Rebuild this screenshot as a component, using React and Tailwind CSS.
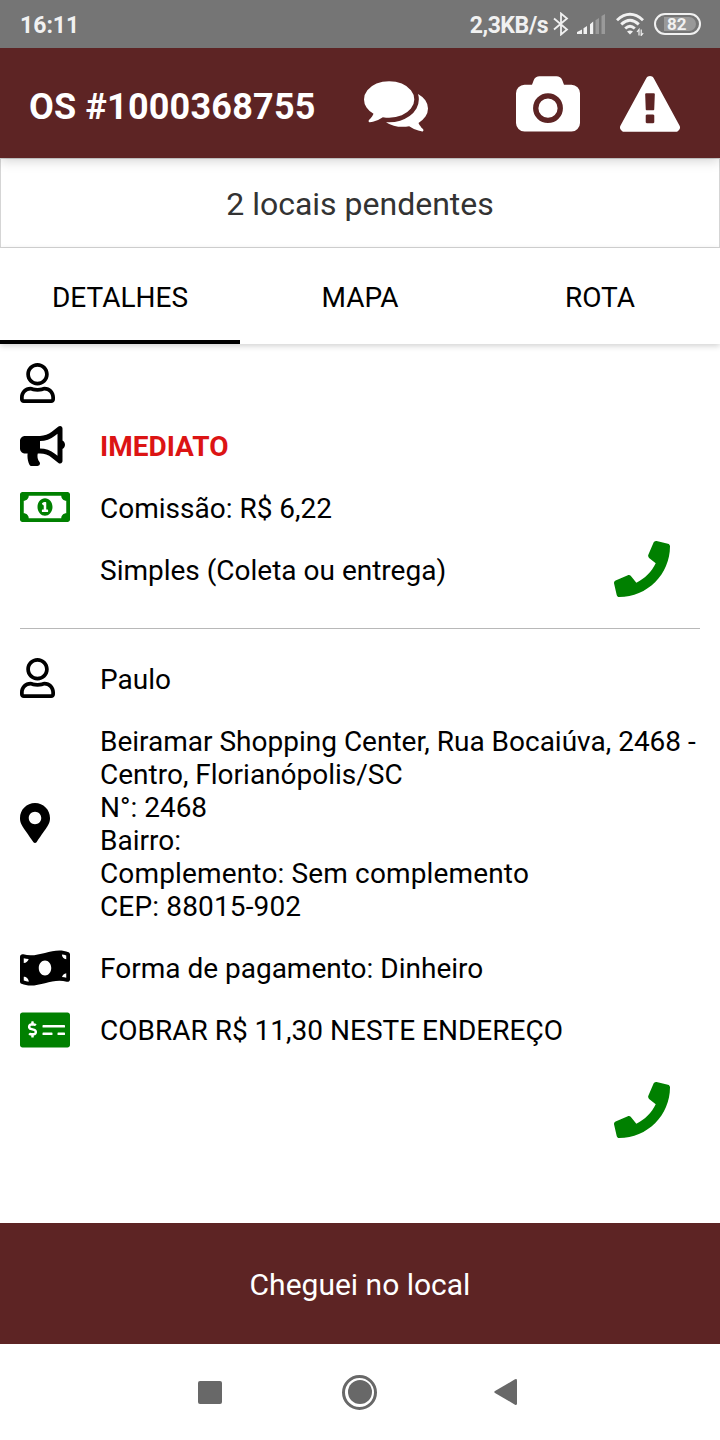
import React from "react";
import {
  FaBullhorn,
  FaMapMarkerAlt,
  FaMoneyBillWave,
  FaMoneyCheckAlt,
  FaPhone,
  FaRegMoneyBillAlt,
  FaRegUser,
} from "react-icons/fa";

function WarningIcon() {
  return (
    <svg className="block h-[60px] w-[60px]" viewBox="0 0 1792 1792" fill="currentColor">
      <path d="M1024 1375v-190q0-14-9.5-23.5t-22.5-9.5h-192q-13 0-22.5 9.5t-9.5 23.5v190q0 14 9.5 23.5t22.5 9.5h192q13 0 22.5-9.5t9.5-23.5zm-2-374l18-459q0-12-10-19-13-11-24-11h-220q-11 0-24 11-10 7-10 21l17 457q0 10 10 16.5t24 6.5h185q14 0 23.5-6.5t10.5-16.5zm-14-934l768 1408q35 63-2 126-17 29-46.5 46t-63.5 17h-1536q-34 0-63.5-17t-46.5-46q-37-63-2-126l768-1408q17-31 47-49t65-18 65 18 47 49z" />
    </svg>
  );
}

function CameraIcon() {
  return (
    <svg className="block h-[60px] w-16" viewBox="0 0 1920 1792" fill="currentColor">
      <path d="M960 672q119 0 203.500 84.500t84.500 203.500-84.500 203.500-203.500 84.500-203.500-84.500-84.500-203.500 84.500-203.500 203.500-84.500zm704-416q106 0 181 75t75 181v896q0 106-75 181t-181 75h-1408q-106 0-181-75t-75-181v-896q0-106 75-181t181-75h224l51-136q19-49 69.500-84.500t103.500-35.500h512q53 0 103.500 35.500t69.500 84.500l51 136h224zm-704 1152q185 0 316.500-131.500t131.500-316.500-131.500-316.500-316.500-131.500-316.500 131.500-131.500 316.500 131.500 316.500 316.500 131.500z" />
    </svg>
  );
}

function ChatIcon() {
  return (
    <svg className="block h-16 w-16" viewBox="0 0 1792 1792" fill="currentColor">
      <path d="M1408 768q0 139-94 257t-256.500 186.500-353.500 68.500q-86 0-176-16-124 88-278 128-36 9-86 16h-3q-11 0-20.500-8t-11.500-21q-1-3-1-6.500t.5-6.500 2-6l2.500-5 3.500-5.500 4-5 4.500-5 4-4.500q5-6 23-25t26-29.500 22.500-29 25-38.500 20.500-44q-124-72-195-177t-71-224q0-139 94-257t256.500-186.500 353.500-68.500 353.500 68.500 256.500 186.500 94 257zm384 256q0 120-71 224.500t-195 176.500q10 24 20.500 44t25 38.500 22.500 29 26 29.500 23 25q1 1 4 4.500t4.500 5 4 5 3.500 5.500l2.500 5 2 6 .5 6.500-1 6.500q-3 14-13 22t-22 7q-50-7-86-16-154-40-278-128-90 16-176 16-271 0-472-132 58 4 88 4 161 0 309-45t264-129q125-92 192-212t67-257q0-77-23-152 129 71 204 178t75 230z" />
    </svg>
  );
}

function StatusBar() {
  return (
    <div className="relative z-20 flex h-12 shrink-0 items-center bg-[#757575] pt-0.5 pr-[19px] pl-5 text-[23px] leading-none font-bold text-[#f1f1f1]">
      <span>16:11</span>
      <span className="ml-auto tracking-[-0.5px]">2,3KB/s</span>
      <svg className="mb-0.5 ml-[5px] block h-6 w-4" viewBox="0 0 16 24" fill="none" stroke="#f1f1f1" strokeWidth="1.8">
        <path d="M1 6.5L14 17.5L8 22.5V1.500L14 6.500L1 17.500" />
      </svg>
      <svg className="mb-0.5 ml-2 block h-6 w-7" viewBox="0 0 28 24" fill="#f1f1f1">
        <path d="M0 22V20L5 17.500V22ZM6.500 22V16.200L10 14V22ZM13 22V12.200L16.200 9.500V22Z" />
        <path opacity=".3" d="M18.500 22V8.200L22 6V22ZM24.500 22V4L28 2V22Z" />
      </svg>
      <svg className="mb-0.5 ml-[11px] block h-6 w-7" viewBox="0 0 28 24" fill="none" stroke="#f1f1f1" strokeWidth="2.9">
        <path d="M1 8.200Q14-3.600 27 8.200M5.200 12.400Q14 4.200 22.800 12.400M9.200 16.500Q14 12 18.800 16.500" />
        <path d="M11 19.500Q14 17.500 17 19.500L14 22.500Z" fill="#f1f1f1" stroke="none" />
        <path d="M23 23.500V17.500L21 20M25.200 17.500V23.500L27.200 21" strokeWidth="1.200" />
      </svg>
      <div className="mb-0.5 ml-2.5 flex h-[22px] w-[47px] items-center rounded-full border-2 border-[#f1f1f1] p-[3px]">
        <div className="ml-[5px] flex h-3.5 w-8 items-center rounded-r-full bg-[#999] pl-[3px] text-[17px] leading-none">
          82
        </div>
      </div>
    </div>
  );
}

function Row({ icon, children }) {
  return (
    <div className="flex items-center py-[14.5px]">
      <div className="flex w-20 shrink-0 items-center">{icon}</div>
      <div className="min-h-[33px] whitespace-nowrap">{children}</div>
    </div>
  );
}

const phoneClass = "block h-14 w-14 text-[#008000]";

export default function App() {
  return (
    <div className="flex h-[1440px] w-[720px] flex-col overflow-hidden bg-white font-['Roboto',sans-serif] text-black">
      <StatusBar />
      <header className="relative z-10 flex h-[110px] shrink-0 items-start bg-[#5d2424] pr-10 pl-[29px] text-white shadow-[0_2px_12px_rgba(0,0,0,0.2)]">
        <h1 className="mt-[41px] w-[335px] text-4xl leading-none font-bold tracking-[0.2px]">OS #1000368755</h1>
        <div className="mt-6">
          <ChatIcon />
        </div>
        <div className="mt-7 ml-auto flex gap-10">
          <CameraIcon />
          <WarningIcon />
        </div>
      </header>
      <div className="flex h-[90px] shrink-0 items-center justify-center border border-[#d5d5d5] pt-0.5 text-[32px] text-[#333]">
        2 locais pendentes
      </div>
      <nav className="grid h-24 shrink-0 grid-cols-3 text-center text-[28px] leading-[100px] shadow-[0_2px_6px_rgba(0,0,0,0.18)]">
        <div className="h-24 border-b-4 border-black">DETALHES</div>
        <div>MAPA</div>
        <div>ROTA</div>
      </nav>
      <main className="flex-1 px-5 pt-[9px] text-[28px] leading-[33px]">
        <Row icon={<FaRegUser className="-mt-[5px] -mb-[3px] block h-10 w-[35px]" />} />
        <Row icon={<FaBullhorn className="-my-1 block h-10 w-[45px]" />}>
          <span className="font-bold text-[#dc1414]">IMEDIATO</span>
        </Row>
        <Row icon={<FaRegMoneyBillAlt className="-mt-[5px] -mb-[3px] block h-10 w-[50px] text-[#008000]" />}>
          Comissão: R$ 6,22
        </Row>
        <div className="flex h-[62px] items-center justify-between pr-[30px]">
          <Row>Simples (Coleta ou entrega)</Row>
          <FaPhone className={`${phoneClass} mb-0.5`} />
        </div>
        <hr className="mt-[27px] mb-[19px] border-[#b8b8b8]" />
        <Row icon={<FaRegUser className="-mt-[5px] -mb-[3px] block h-10 w-[35px]" />}>Paulo</Row>
        <Row icon={<FaMapMarkerAlt className="mb-0.5 block h-10 w-[30px]" />}>
          Beiramar Shopping Center, Rua Bocaiúva, 2468 -<br />
          Centro, Florianópolis/SC
          <br />
          N°: 2468
          <br />
          Bairro:
          <br />
          <span className="tracking-[0.150px]">Complemento: Sem complemento</span>
          <br />
          <span className="tracking-[0.150px]">CEP: 88015-902</span>
        </Row>
        <Row icon={<FaMoneyBillWave className="-my-1 block h-10 w-[50px]" />}>Forma de pagamento: Dinheiro</Row>
        <Row icon={<FaMoneyCheckAlt className="-my-1 block h-10 w-[50px] text-[#008000]" />}>
          COBRAR R$ 11,30 NESTE ENDEREÇO
        </Row>
        <div className="mt-[21px] flex justify-end pr-[30px]">
          <FaPhone className={phoneClass} />
        </div>
      </main>
      <button className="flex h-[121px] shrink-0 items-center justify-center bg-[#5d2424] pt-0.5 text-[30px] text-white">
        Cheguei no local
      </button>
      <div className="flex h-24 shrink-0 items-center pl-[198px]">
        <div className="h-[23px] w-6 rounded-xs bg-[#686868]" />
        <div className="ml-[120px] flex h-[35px] w-[35px] items-center justify-center rounded-full border-[3px] border-[#686868]">
          <div className="h-6 w-6 rounded-full bg-[#686868]" />
        </div>
        <svg className="ml-[117px] block h-[26px] w-[23px]" viewBox="0 0 23 26" fill="#686868">
          <path d="M1 12L21 .3Q23-.5 23 1.500V24.500Q23 26.500 21 25.700L1 14Q-.5 13 1 12Z" />
        </svg>
      </div>
    </div>
  );
}
